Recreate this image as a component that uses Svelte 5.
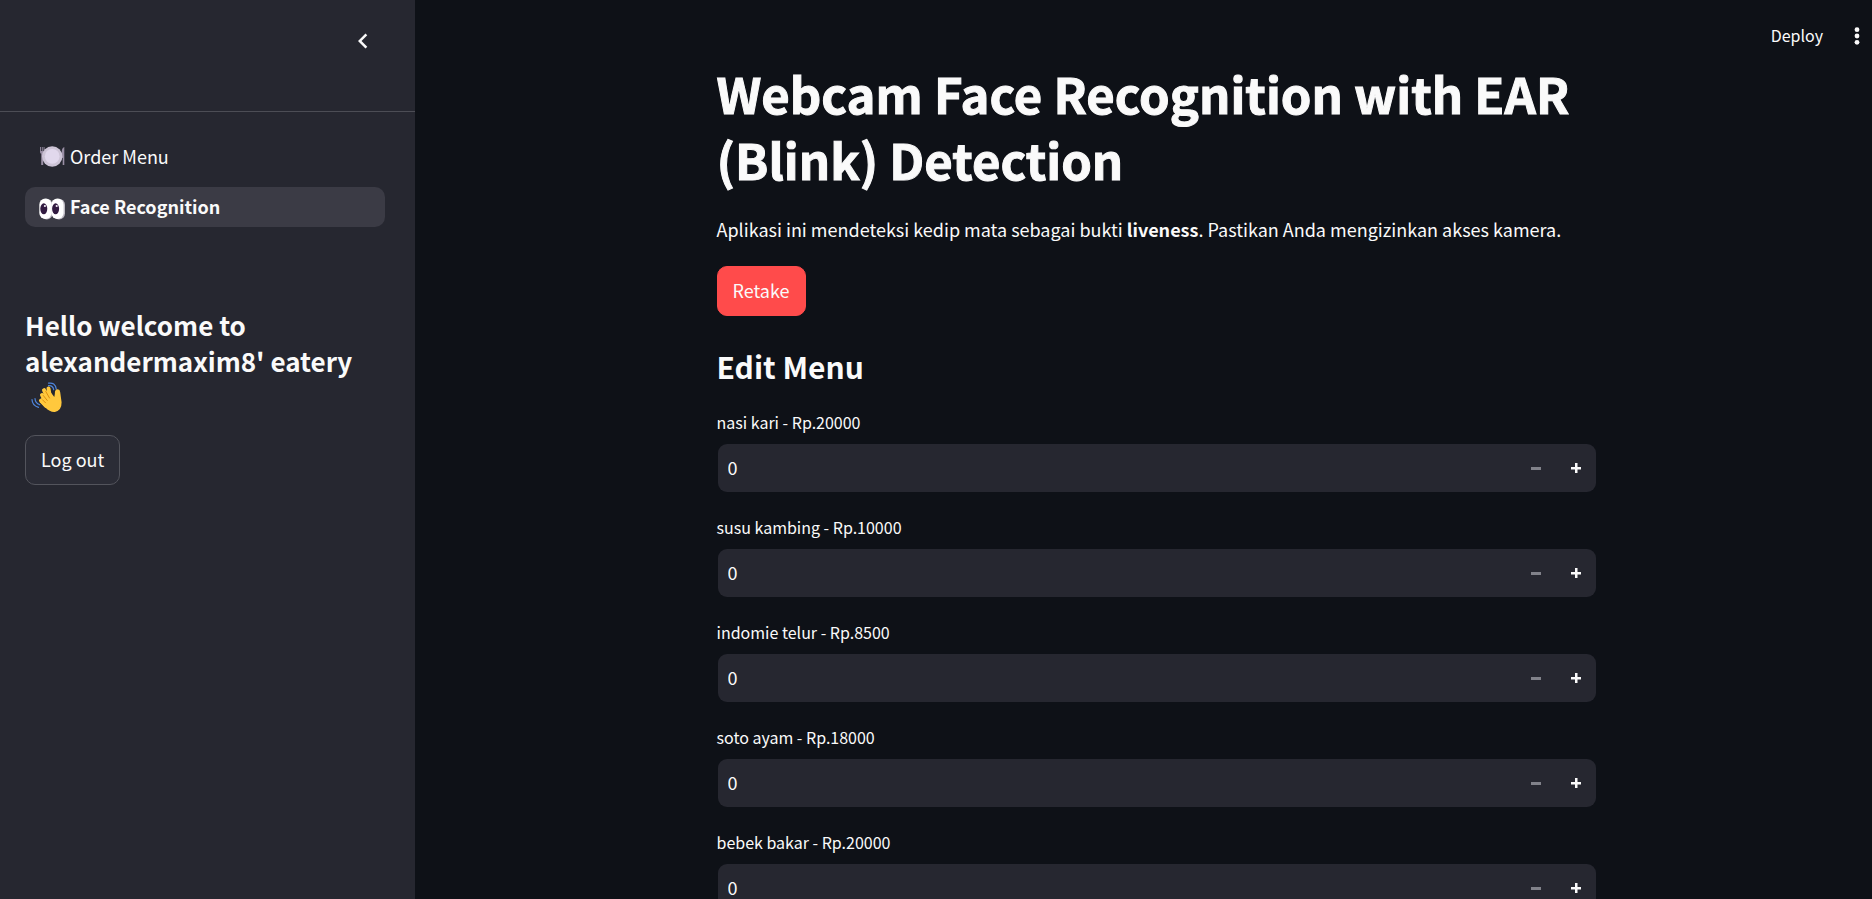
<script>
  let items = $state([
    { id: 'nasi-kari', name: 'nasi kari', price: 20000, qty: 0 },
    { id: 'susu-kambing', name: 'susu kambing', price: 10000, qty: 0 },
    { id: 'indomie-telur', name: 'indomie telur', price: 8500, qty: 0 },
    { id: 'soto-ayam', name: 'soto ayam', price: 18000, qty: 0 },
    { id: 'bebek-bakar', name: 'bebek bakar', price: 20000, qty: 0 }
  ]);
</script>

<div class="app">
  <aside class="sidebar">
    <div class="sidebar-head">
      <button class="icon-button" aria-label="Collapse sidebar">
        <svg width="30" height="30" viewBox="0 0 24 24" fill="currentColor">
          <path d="M15.41 7.41 14 6l-6 6 6 6 1.41-1.41L10.83 12z" />
        </svg>
      </button>
    </div>

    <nav class="nav">
      <a class="nav-item" href="#order">
        <svg width="26" height="22" viewBox="0 0 26 22" aria-hidden="true">
          <path d="M1 2v5q0 1.500 1.200 1.800V20h2V8.800Q5.500 8.500 5.500 7V2h-.9v4H3.700V2h-.9v4H1.900V2z" fill="#998ea4" />
          <path d="M25.300 2q-2.600 1-2.600 5v6h1V20h1.600z" fill="#998ea4" />
          <circle cx="13.200" cy="11.500" r="10.200" fill="#cdc4d6" />
          <circle cx="13.200" cy="11.300" r="7.400" fill="#e1d8ec" />
        </svg>
        <span>Order Menu</span>
      </a>
      <a class="nav-item active" href="#face" aria-current="page">
        <svg width="26" height="28" viewBox="0 0 26 28" aria-hidden="true">
          <rect x="2" y="6.800" width="11.500" height="20.600" rx="5.750" fill="#bdb9c2" />
          <rect x="14" y="6.800" width="12" height="20.600" rx="6" fill="#bdb9c2" />
          <rect x=".3" y="6.500" width="12.300" height="20.600" rx="6.150" fill="#fff" />
          <rect x="12.300" y="6.500" width="12.300" height="20.600" rx="6.150" fill="#fff" />
          <ellipse cx="4.800" cy="16.800" rx="3.500" ry="5.500" fill="#321b41" />
          <ellipse cx="16.600" cy="16.800" rx="3.500" ry="5.500" fill="#321b41" />
          <circle cx="5.900" cy="14" r="1.100" fill="#f3eef8" />
          <circle cx="17.700" cy="14" r="1.100" fill="#f3eef8" />
        </svg>
        <span>Face Recognition</span>
      </a>
    </nav>

    <section class="account">
      <h3>
        Hello welcome to alexandermaxim8' eatery
        <svg class="wave" width="31" height="31" viewBox="0 0 31 31" aria-label="waving hand" role="img">
          <g fill="none" stroke="#4f86dc" stroke-width="1.200" stroke-linecap="round">
            <path d="M17.500 1.200q6.500-1.200 7.800 6" />
            <path d="M17.500 3.700q4.500-.4 5.200 4" />
            <path d="M1 17.500q.2 6 6.500 7.800" />
            <path d="M4 16.500q.2 4.500 4.800 6.300" />
          </g>
          <g stroke="#ffc83d" stroke-linecap="round" fill="none" stroke-width="4">
            <path d="M19 16 17.500 6.500" />
            <path d="M17 17 13 8.200" />
            <path d="M15 20 11 13" />
            <path d="M15 24 10 18.500" />
          </g>
          <path d="M8.500 20 14 9l4-1 5.300 7q.7-3 .7-5.500.4-2.300 2.700-2.300 2.300.2 2.500 3l1.400 10q.2 8-6.700 9.700-5 .4-9.500-4.400z" fill="#ffc83d" />
          <path d="m12.300 13.500 4 5M14.800 9.500l3.700 6.500M11.500 17.800l3 3" stroke="#d67d00" stroke-width=".8" stroke-linecap="round" fill="none" />
        </svg>
      </h3>
      <button class="button">Log out</button>
    </section>
  </aside>

  <div class="main">
    <header class="toolbar">
      <button class="deploy">Deploy</button>
      <button class="icon-button" aria-label="More options">
        <svg width="30" height="30" viewBox="0 0 30 30" fill="currentColor">
          <circle cx="15" cy="8.700" r="2.400" />
          <circle cx="15" cy="15" r="2.400" />
          <circle cx="15" cy="21.300" r="2.400" />
        </svg>
      </button>
    </header>

    <main class="content">
      <h1>Webcam Face Recognition with EAR (Blink) Detection</h1>
      <p>
        Aplikasi ini mendeteksi kedip mata sebagai bukti <strong>liveness</strong>. Pastikan Anda
        mengizinkan akses kamera.
      </p>
      <button class="button primary">Retake</button>
      <h2>Edit Menu</h2>
      <div class="fields">
        {#each items as item (item.id)}
          <div class="field">
            <label for={item.id}>{item.name} - Rp.{item.price}</label>
            <div class="stepper">
              <input id={item.id} type="number" min="0" bind:value={item.qty} />
              <button aria-label="Decrease {item.name}" disabled={item.qty <= 0} onclick={() => item.qty--}>
                <svg width="10" height="10" viewBox="0 0 10 10" fill="currentColor"><path d="M0 4h10v3H0z" /></svg>
              </button>
              <button aria-label="Increase {item.name}" onclick={() => item.qty++}>
                <svg width="10" height="10" viewBox="0 0 10 10" fill="currentColor">
                  <path d="M4 0h2.500v4H10v2.500H6.500V10H4V6.500H0V4h4z" />
                </svg>
              </button>
            </div>
          </div>
        {/each}
      </div>
    </main>
  </div>
</div>

<style>
  :global(body) {
    background: #0e1117;
  }

  .app,
  .app * {
    box-sizing: border-box;
  }

  .app {
    display: flex;
    height: 100vh;
    overflow: hidden;
    color: #fafafa;
    font-family: 'Noto Sans CJK SC', 'Noto Sans', sans-serif;
    font-size: 18px;
    line-height: 32px;
  }

  button,
  input {
    font: inherit;
    color: inherit;
    border: 0;
    background: none;
    padding: 0;
  }

  h1,
  h2,
  h3,
  p {
    margin: 0;
  }

  svg {
    display: block;
    flex: none;
  }

  .sidebar {
    flex: none;
    width: 415px;
    background: #262730;
  }

  .sidebar-head {
    display: flex;
    justify-content: flex-end;
    align-items: flex-start;
    height: 112px;
    padding: 26px 37px;
    border-bottom: 1px solid #4c4d55;
  }

  .icon-button {
    display: flex;
    align-items: center;
    justify-content: center;
  }

  .nav {
    display: flex;
    flex-direction: column;
    gap: 10px;
    padding: 25px 30px 0 25px;
  }

  .nav-item {
    display: flex;
    align-items: center;
    gap: 5px;
    height: 40px;
    padding: 0 14px 2px;
    border-radius: 10px;
    color: inherit;
    text-decoration: none;
  }

  .nav-item.active {
    background: #3b3b45;
    font-weight: 600;
  }

  .account {
    display: flex;
    flex-direction: column;
    align-items: flex-start;
    gap: 18px;
    padding: 80px 30px 0 25px;
  }

  h3 {
    font-size: 26px;
    line-height: 36px;
    font-weight: 600;
  }

  .wave {
    margin: 3px 0 4px 6px;
  }

  .button {
    height: 50px;
    padding: 0 15px 2px;
    border: 1px solid #53545c;
    border-radius: 10px;
    background: #2b2c36;
  }

  .button.primary {
    border-color: #ff4b4b;
    background: #ff4b4b;
  }

  .main {
    flex: 1;
    min-width: 0;
    overflow-y: auto;
    scrollbar-width: none;
  }

  .toolbar {
    display: flex;
    align-items: center;
    justify-content: flex-end;
    gap: 19px;
    height: 60px;
    padding-top: 12px;
  }

  .deploy {
    padding-bottom: 2px;
    font-size: 16px;
  }

  .content {
    display: flex;
    flex-direction: column;
    align-items: flex-start;
    width: 100%;
    max-width: 906px;
    margin: 0 auto;
    padding-left: 26px;
  }

  h1 {
    font-size: 49px;
    line-height: 66px;
    font-weight: 700;
    -webkit-text-stroke: 1px currentColor;
  }

  p {
    padding: 21px 0;
  }

  h2 {
    padding: 27px 0 18px;
    font-size: 30px;
    line-height: 46px;
    font-weight: 600;
  }

  .fields {
    display: flex;
    flex-direction: column;
    gap: 19px;
    width: 100%;
  }

  .field {
    display: flex;
    flex-direction: column;
    gap: 6px;
  }

  label {
    font-size: 16px;
    line-height: 30px;
  }

  .stepper {
    display: flex;
    height: 50px;
    border: 1px solid transparent;
    border-radius: 10px;
    background: #262730;
    background-clip: padding-box;
  }

  .stepper input {
    flex: 1;
    min-width: 0;
    padding: 0 10px 2px;
    outline: 0;
    appearance: textfield;
  }

  .stepper button {
    display: flex;
    align-items: center;
    justify-content: center;
    width: 40px;
  }

  .stepper button:disabled {
    color: #81828a;
  }
</style>
